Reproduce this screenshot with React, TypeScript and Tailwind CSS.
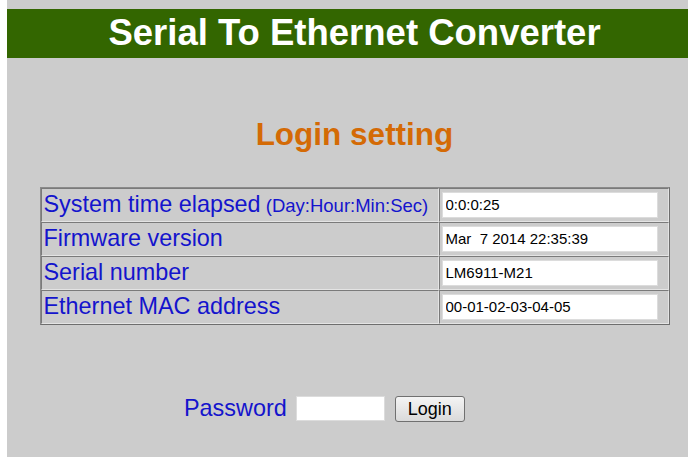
import { useState } from "react";

type InfoRow = { label: string; hint?: string; value: string };

const rows: InfoRow[] = [
  { label: "System time elapsed", hint: "(Day:Hour:Min:Sec)", value: "0:0:0:25" },
  { label: "Firmware version", value: "Mar  7 2014 22:35:39" },
  { label: "Serial number", value: "LM6911-M21" },
  { label: "Ethernet MAC address", value: "00-01-02-03-04-05" },
];

export default function App() {
  const [password, setPassword] = useState("");

  return (
    <div className="h-[457px] w-[688px] overflow-hidden bg-white pl-[7px] font-['Liberation_Sans',Arial,sans-serif]">
      <div className="h-full w-[695px] bg-[#cccccc] pt-[9px]">
        {/* page banner */}
        <header className="flex h-[49px] items-center justify-center bg-[#336600]">
          <h1 className="text-[36.5px] font-bold leading-none text-white">Serial To Ethernet Converter</h1>
        </header>

        <h2 className="mt-[61px] text-center text-[31.5px] font-bold leading-none text-[#d46a05]">
          Login setting
        </h2>

        {/* device info */}
        <table className="mx-auto mt-[36px] w-[630px] border-separate border-spacing-0 border border-t-[#8a8a8a] border-l-[#8a8a8a] border-b-[#6e6e6e] border-r-[#6e6e6e]">
          <tbody>
            {rows.map((r) => (
              <tr key={r.label}>
                <td className="h-[34px] w-[398px] border border-t-[#7a7a7a] border-l-[#7a7a7a] border-b-[#e4e4e4] border-r-[#e4e4e4] px-[2px] align-middle text-[23.4px] leading-none whitespace-nowrap text-[#1414cc]">
                  {r.label}
                  {r.hint && <span className="text-[18.5px]"> {r.hint}</span>}
                </td>
                <td className="h-[34px] border border-t-[#7a7a7a] border-l-[#7a7a7a] border-b-[#e4e4e4] border-r-[#e4e4e4] px-[2px] align-middle">
                  <input
                    readOnly
                    value={r.value}
                    className="h-[26px] w-[216px] border border-[#dcdcdc] bg-white px-[3px] text-[15px] whitespace-pre text-black outline-none"
                  />
                </td>
              </tr>
            ))}
          </tbody>
        </table>

        {/* login */}
        <form
          className="mt-[71px] ml-[177px] flex items-center"
          onSubmit={(e) => e.preventDefault()}
        >
          <label htmlFor="pwd" className="text-[23.4px] leading-none text-[#1414cc]">
            Password
          </label>
          <input
            id="pwd"
            type="password"
            value={password}
            onChange={(e) => setPassword(e.target.value)}
            className="ml-[9px] h-[25px] w-[89px] border border-[#dcdcdc] bg-white outline-none"
          />
          <button
            type="submit"
            className="ml-[10px] h-[26px] w-[70px] rounded-[3px] border border-[#707070] bg-gradient-to-b from-[#f4f4f4] to-[#dadada] text-[18px] leading-none text-black"
          >
            Login
          </button>
        </form>
      </div>
    </div>
  );
}
